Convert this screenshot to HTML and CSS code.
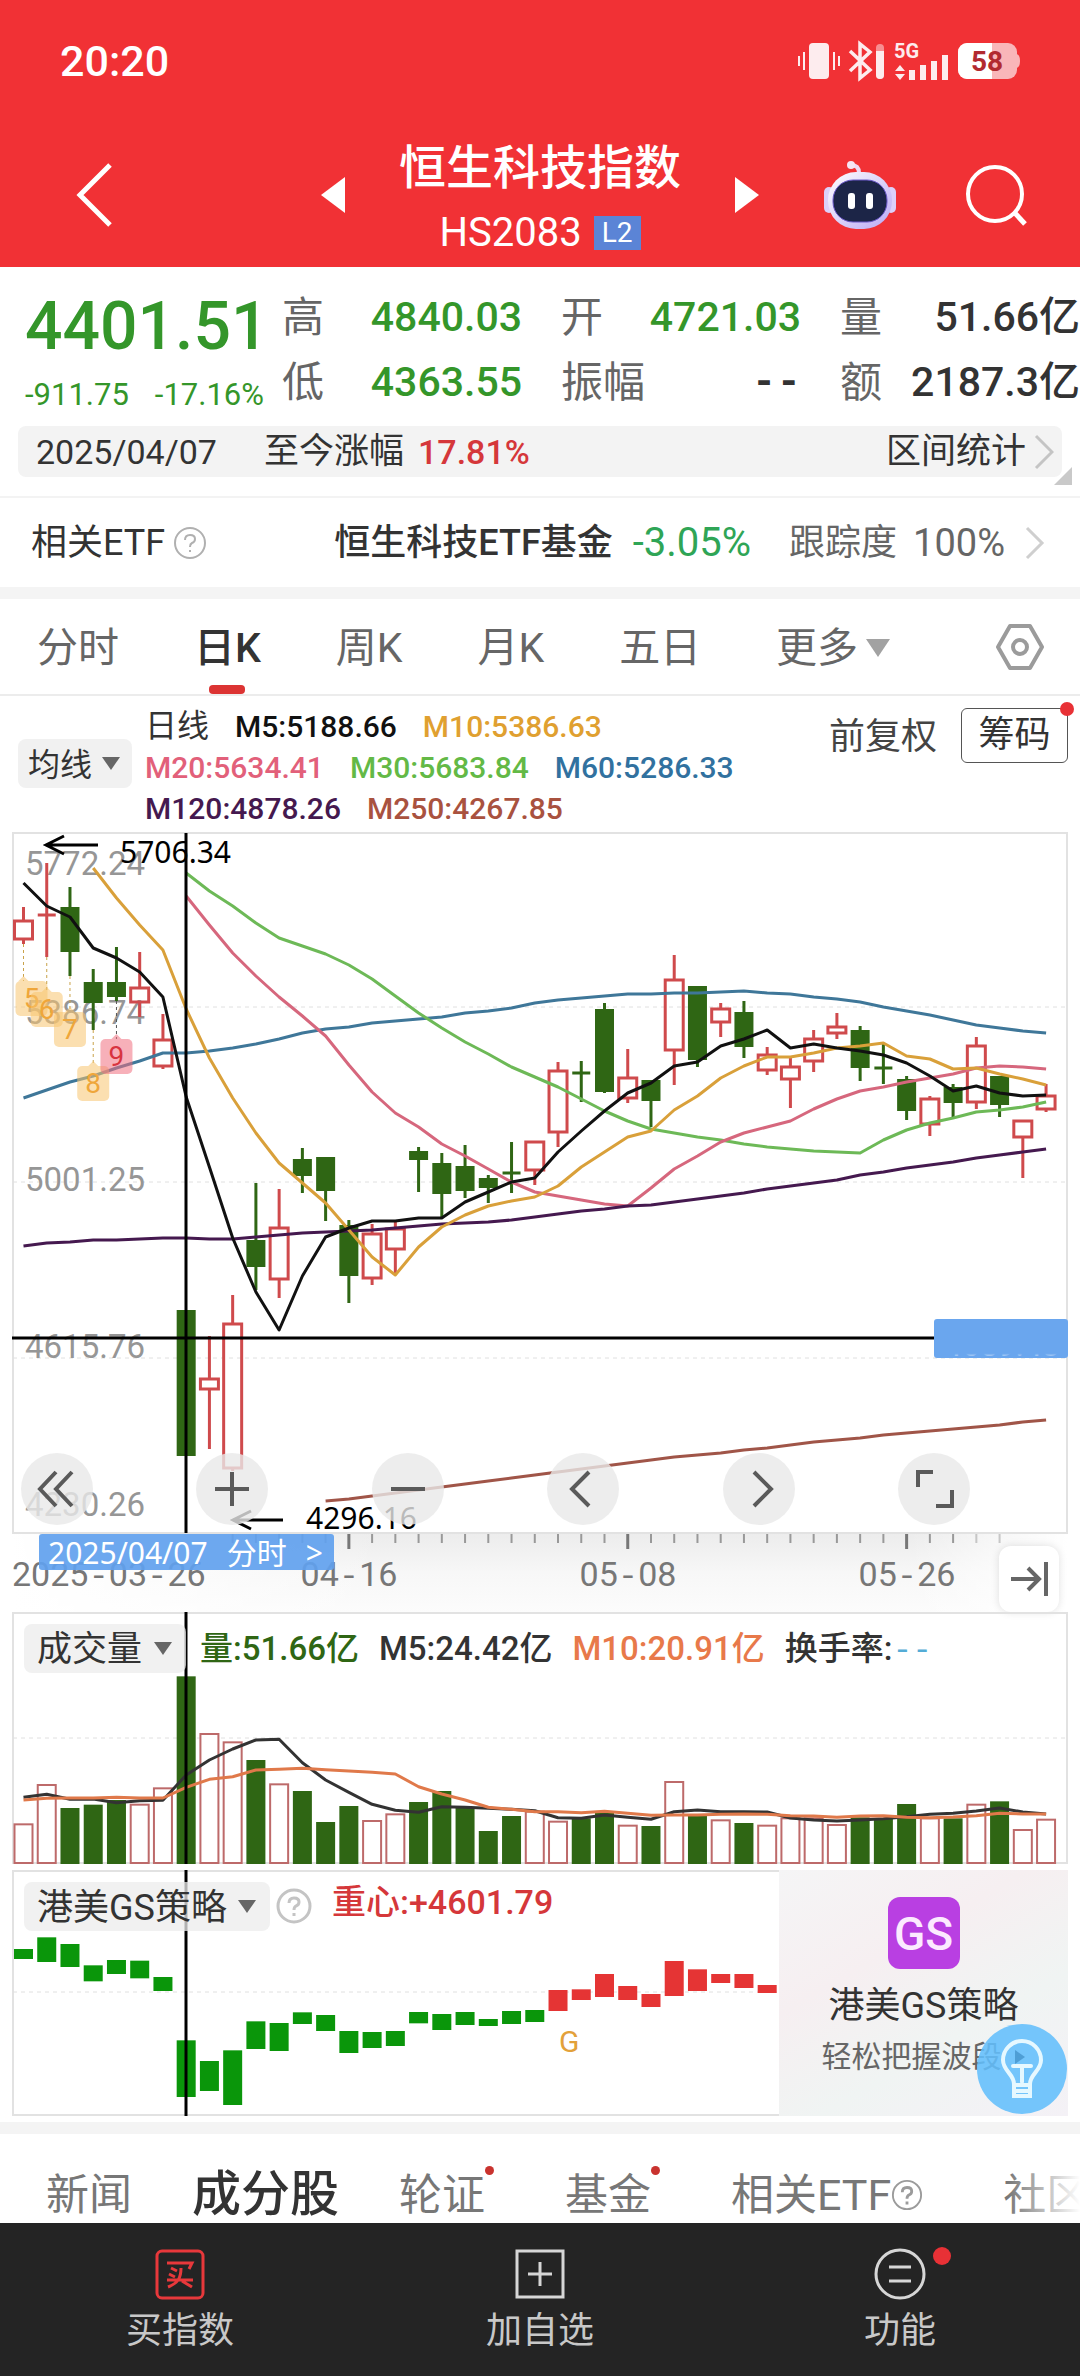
FILE: index.html
```html
<!DOCTYPE html>
<html lang="zh-CN">
<head>
<meta charset="utf-8">
<meta name="viewport" content="width=device-width">
<title>恒生科技指数 HS2083</title>
<link rel="stylesheet" href="styles.css">
</head>
<body>
<header class="top">
  <div class="status">
    <span class="clock">20:20</span>
    <svg class="status-icons" width="230" height="44" viewBox="0 0 230 44" aria-hidden="true">
      <g fill="#fdecee">
        <rect x="13" y="4" width="20" height="36" rx="4"/>
        <path d="M7 13h2v18H7zM2 17h2v10H2zM37 13h2v18h-2zM42 17h2v10h-2z"/>
        <rect x="80" y="5" width="8" height="35" rx="4" opacity=".5"/>
        <path d="M80 12h8v24a4 4 0 0 1-8 0z"/>
        <path d="M99 32l5-6 5 6zM99 35h10l-5 6zM113 31h6v10h-6zM124 26h6v15h-6zM135 22h6v19h-6zM146 16h6v25h-6z"/>
      </g>
      <path d="M54 12l20 19-10 8V5l10 8-20 19" fill="none" stroke="#fdecee" stroke-width="3.5"/>
      <text x="98" y="19" class="net">5G</text>
      <path d="M220 15q4 0 4 7t-4 7z" fill="#f9b6b9"/>
      <rect x="162" y="4" width="59" height="36" rx="9" fill="#f9b6b9"/>
      <path d="M171 4h25v36h-25a9 9 0 0 1-9-9V13a9 9 0 0 1 9-9z" fill="#fff"/>
      <text x="191" y="32" text-anchor="middle" class="battery">58</text>
    </svg>
  </div>
  <div class="titlebar">
    <div class="title-left">
      <button class="icon-btn" aria-label="返回"><svg width="38" height="66" viewBox="0 0 38 66"><path d="M34 3L4 33l30 30" fill="none" stroke="#fff" stroke-width="5"/></svg></button>
    </div>
    <div class="switcher">
      <button class="icon-btn" aria-label="上一个"><svg width="24" height="36" viewBox="0 0 24 36"><path d="M24 0v36L0 18z" fill="#fff"/></svg></button>
      <div class="name">
        <h1>恒生科技指数</h1>
        <p>HS2083<span class="level">L2</span></p>
      </div>
      <button class="icon-btn" aria-label="下一个"><svg width="24" height="36" viewBox="0 0 24 36"><path d="M0 0v36l24-18z" fill="#fff"/></svg></button>
    </div>
    <div class="title-right">
      <button class="icon-btn" aria-label="智能助手">
        <svg width="74" height="70" viewBox="0 0 74 70">
          <defs><linearGradient id="bot" x1="0" y1="0" x2="1" y2="1"><stop offset="0" stop-color="#fff"/><stop offset="1" stop-color="#b9a8f4"/></linearGradient></defs>
          <path d="M36 13q0-8-8-8" fill="none" stroke="#efd9f4" stroke-width="4"/><circle cx="28" cy="5" r="4" fill="#f6e4f4"/>
          <rect x="1" y="27" width="10" height="26" rx="5" fill="#dcd0fa"/><rect x="63" y="27" width="10" height="26" rx="5" fill="#dcd0fa"/>
          <rect x="5" y="12" width="64" height="57" rx="28" fill="url(#bot)"/>
          <rect x="10" y="20" width="54" height="42" rx="20" fill="#1c2547" stroke="#6a58c8" stroke-width="1"/>
          <rect x="25" y="33" width="7" height="16" rx="3" fill="#fff"/><rect x="43" y="33" width="7" height="16" rx="3" fill="#fff"/>
        </svg>
      </button>
      <button class="icon-btn" aria-label="搜索"><svg width="62" height="62" viewBox="0 0 62 62"><circle cx="30" cy="30" r="27" fill="none" stroke="#fff" stroke-width="4"/><path d="M49 48l11 12" stroke="#fff" stroke-width="5"/></svg></button>
    </div>
  </div>
</header>

<main>
<section class="quote">
  <div class="last">
    <strong>4401.51</strong>
    <p><span>-911.75</span><span>-17.16%</span></p>
  </div>
  <dl class="stats">
    <div><dt>高</dt><dd class="down">4840.03</dd></div>
    <div><dt>开</dt><dd class="down">4721.03</dd></div>
    <div><dt>量</dt><dd>51.66亿</dd></div>
    <div><dt>低</dt><dd class="down">4363.55</dd></div>
    <div><dt>振幅</dt><dd class="none">--</dd></div>
    <div><dt>额</dt><dd>2187.3亿</dd></div>
  </dl>
</section>

<section class="since">
  <time>2025/04/07</time>
  <span class="since-label">至今涨幅</span><b>17.81%</b>
  <a href="#range">区间统计<svg width="20" height="36" viewBox="0 0 20 36"><path d="M2 2l16 16L2 34" fill="none" stroke="#c4c4c4" stroke-width="3"/></svg></a>
  <i class="corner"></i>
</section>

<section class="etf">
  <span class="etf-label">相关ETF</span>
  <svg class="help" width="34" height="34" viewBox="0 0 34 34"><circle cx="17" cy="17" r="15" fill="none" stroke="#b0b0b0" stroke-width="2"/><path d="M12 14q0-5 5-5t5 4q0 3-3 4-2 1-2 4M17 24v2" fill="none" stroke="#b0b0b0" stroke-width="2"/></svg>
  <a class="etf-name" href="#etf">恒生科技ETF基金</a>
  <span class="etf-chg">-3.05%</span>
  <span class="etf-track">跟踪度</span>
  <span class="etf-pct">100%</span>
  <svg class="etf-more" width="20" height="34" viewBox="0 0 20 34"><path d="M2 2l15 15L2 32" fill="none" stroke="#cfcfcf" stroke-width="3"/></svg>
</section>
<hr class="band">

<nav class="periods">
  <button>分时</button>
  <button class="on">日K</button>
  <button>周K</button>
  <button>月K</button>
  <button>五日</button>
  <button class="more">更多<i class="tri"></i></button>
  <button class="gear" aria-label="设置"><svg width="50" height="48" viewBox="0 0 50 48"><path d="M15 3h20l12 21-12 21H15L3 24z" fill="none" stroke="#9b9b9b" stroke-width="4" stroke-linejoin="round"/><circle cx="25" cy="24" r="7" fill="none" stroke="#9b9b9b" stroke-width="4"/></svg></button>
</nav>

<section class="legend">
  <span class="pick pick-ma"><select aria-label="主图指标"><option>均线</option></select></span>
  <ul>
    <li class="plain">日线</li><li class="c-m5">M5:5188.66</li><li class="c-m10">M10:5386.63</li>
    <li class="brk c-m20">M20:5634.41</li><li class="c-m30">M30:5683.84</li><li class="c-m60">M60:5286.33</li>
    <li class="brk c-m120">M120:4878.26</li><li class="c-m250">M250:4267.85</li>
  </ul>
  <div class="legend-tools">
    <button class="adjust">前复权</button>
    <button class="chips">筹码<i class="dot"></i></button>
  </div>
</section>

<section class="chart price">
  <svg id="price" viewBox="12 832 1056 780" role="img" aria-label="日K线图">
    <defs>
      <linearGradient id="axisbg" x1="0" y1="0" x2="0" y2="1"><stop offset="0" stop-color="#ececec"/><stop offset=".5" stop-color="#f7f7f7"/><stop offset="1" stop-color="#fcfcfc"/></linearGradient>
      <linearGradient id="axisfade" x1="0" y1="0" x2="1" y2="0"><stop offset="0" stop-color="#fff"/><stop offset=".35" stop-color="#fff" stop-opacity="0"/><stop offset=".85" stop-color="#fff" stop-opacity="0"/><stop offset="1" stop-color="#fff"/></linearGradient>
      <linearGradient id="tagtext" x1="0" y1="0" x2="0" y2="1"><stop offset=".72" stop-color="#fff" stop-opacity="0"/><stop offset=".82" stop-color="#fff" stop-opacity=".6"/></linearGradient>
    </defs>
    <rect x="12" y="1533" width="1056" height="79" fill="url(#axisbg)"/>
    <rect x="12" y="1533" width="1056" height="79" fill="url(#axisfade)"/>
    <rect x="13" y="833" width="1054" height="700" class="frame"/>
    <path d="M13 1007H1067M13 1182H1067M13 1358H1067" class="grid"/>
    <g class="ylab">
      <text x="25" y="875">5772.24</text><text x="25" y="1024">5386.74</text><text x="25" y="1191">5001.25</text>
      <text x="25" y="1358">4615.76</text><text x="25" y="1516">4230.26</text>
    </g>
    <g id="price-data"></g>
    <g class="extreme">
      <path d="M98 845H46M64 836l-18 9 18 9M283 1520h-50M251 1511l-18 9 18 9"/>
      <text x="120" y="863">5706.34</text><text x="306" y="1529">4296.16</text>
    </g>
    <path d="M186 833V1533M12 1338H934" class="cross"/>
    <rect x="934" y="1319" width="134" height="39" rx="3" fill="#6aa6ee"/>
    <text x="1060" y="1356" text-anchor="end" class="tag-price">4659.43</text>
    <g id="ticks"></g>
    <g class="xlab">
      <text x="12" y="1586">2025<tspan class="dash">-</tspan>03<tspan class="dash">-</tspan>26</text><text x="349" y="1586" text-anchor="middle">04<tspan class="dash">-</tspan>16</text>
      <text x="628" y="1586" text-anchor="middle">05<tspan class="dash">-</tspan>08</text><text x="907" y="1586" text-anchor="middle">05<tspan class="dash">-</tspan>26</text>
    </g>
  </svg>
  <a class="day-link" href="#day"><span>2025/04/07</span><span>分时</span><span>&gt;</span></a>
  <div class="tools">
    <button aria-label="最左"><svg viewBox="0 0 72 72"><path d="M35 19L19 36l16 17M51 19L35 36l16 17"/></svg></button>
    <button aria-label="放大"><svg viewBox="0 0 72 72"><path d="M36 19v34M19 36h34"/></svg></button>
    <button aria-label="缩小"><svg viewBox="0 0 72 72"><path d="M19 36h34"/></svg></button>
    <button aria-label="左移"><svg viewBox="0 0 72 72"><path d="M42 19L25 36l17 17"/></svg></button>
    <button aria-label="右移"><svg viewBox="0 0 72 72"><path d="M31 19l17 17-17 17"/></svg></button>
    <button aria-label="全屏"><svg viewBox="0 0 72 72"><path d="M35 19H20v15M54 37v16H38"/></svg></button>
  </div>
  <button class="to-end" aria-label="回到最新"><svg width="40" height="36" viewBox="0 0 40 36"><path d="M2 18h28M19 7l11 11-11 11M37 1v34" fill="none" stroke="#666" stroke-width="4"/></svg></button>
</section>

<section class="chart volume">
  <svg id="volume" viewBox="12 1612 1056 252" role="img" aria-label="成交量">
    <rect x="13" y="1613" width="1054" height="250" class="frame"/>
    <path d="M13 1738H1067" class="grid"/>
    <g id="volume-data"></g>
    <path d="M186 1612V1864" class="cross"/>
  </svg>
  <div class="overlay">
    <span class="pick"><select aria-label="副图指标一"><option>成交量</option></select></span>
    <span class="v-now">量:51.66亿</span><span>M5:24.42亿</span><span class="v-m10">M10:20.91亿</span>
    <span>换手率:<em class="dash">--</em></span>
  </div>
</section>

<section class="chart strategy">
  <div class="gs-plot">
    <svg id="gs" viewBox="12 1870 767 246" role="img" aria-label="港美GS策略">
      <path d="M779 1871H13V2115H779" class="frame"/>
      <path d="M13 1992H779" class="grid"/>
      <g id="gs-data"></g>
      <text x="559" y="2052" class="gmark">G</text>
      <path d="M186 1870V2116" class="cross"/>
    </svg>
    <div class="overlay">
      <span class="pick"><select aria-label="副图指标二"><option>港美GS策略</option></select></span>
      <svg class="help" width="36" height="36" viewBox="0 0 36 36"><circle cx="18" cy="18" r="16" fill="#fff" stroke="#c4c4c4" stroke-width="3"/><path d="M13 15q0-5 5-5t5 4q0 3-3 4-2 1-2 4M18 25v3" fill="none" stroke="#c4c4c4" stroke-width="3"/></svg>
      <span class="gs-val">重心:+4601.79</span>
    </div>
  </div>
  <a class="promo" href="#gs">
    <span class="promo-logo">GS</span>
    <span class="promo-title">港美GS策略</span>
    <span class="promo-sub">轻松把握波段</span>
  </a>
  <button class="bulb" aria-label="提示"><svg width="90" height="90" viewBox="0 0 90 90"><path d="M38 26l10 7-10 7z" fill="#3f8dc4" opacity=".7"/><g fill="none" stroke="#e6f8ff" stroke-width="4" stroke-linecap="round"><path d="M37 60c0-10-11-13-11-24a19 19 0 0 1 38 0c0 11-11 14-11 24v12H37z"/><path d="M36 42h18M45 42v16M38 61h14M38 67h14"/></g></svg></button>
</section>
<hr class="band">

<nav class="tabs">
  <a href="#news">新闻</a>
  <a href="#parts" class="on">成分股</a>
  <a href="#warrant">轮证<i class="dot"></i></a>
  <a href="#fund">基金<i class="dot"></i></a>
  <a href="#etfs" class="wide">相关ETF<svg width="32" height="32" viewBox="0 0 34 34"><circle cx="17" cy="17" r="15" fill="none" stroke="#9b9b9b" stroke-width="2"/><path d="M12 14q0-5 5-5t5 4q0 3-3 4-2 1-2 4M17 24v3" fill="none" stroke="#9b9b9b" stroke-width="3"/></svg></a>
  <a href="#club">社区</a>
</nav>
</main>

<footer class="dock">
  <button><svg width="50" height="52" viewBox="0 0 50 52"><rect x="2" y="3" width="46" height="47" rx="5" fill="none" stroke="#e8383b" stroke-width="3"/><path d="M12 15h25l-3 6M16 20l6 3M14 26l6 3M12 32h26M26 20c0 10-3 15-13 19M27 33l10 6" fill="none" stroke="#e8383b" stroke-width="3"/></svg>买指数</button>
  <button><svg width="50" height="52" viewBox="0 0 50 52"><path d="M2 3h46v46H2zM25 14v24M13 26h24" fill="none" stroke="#d6d6d6" stroke-width="3"/></svg>加自选</button>
  <button class="fn"><svg width="52" height="52" viewBox="0 0 52 52"><circle cx="26" cy="26" r="24" fill="none" stroke="#d6d6d6" stroke-width="3"/><path d="M15 19h22M15 33h22" stroke="#d6d6d6" stroke-width="3"/></svg>功能<i class="dot"></i></button>
</footer>
<script src="chart.js"></script>
</body>
</html>
```
FILE: styles.css
```css
* { box-sizing: border-box; margin: 0; padding: 0; }
body {
  font-family: Roboto, "Noto Sans CJK SC", sans-serif;
  color: #333;
  background: #fff;
  overflow-x: hidden;
  min-height: 100vh;
  display: flex;
  flex-direction: column;
}
main { flex: 1; }
button, select { font: inherit; color: inherit; border: 0; background: none; }
a { color: inherit; text-decoration: none; }
ul { list-style: none; }
svg { display: block; }
.dash { font-family: "Liberation Mono", monospace; }

/* header */
.top { background: #f13135; color: #fff; }
.status { height: 122px; padding: 0 54px 0 60px; display: flex; justify-content: space-between; align-items: center; }
.clock { font-size: 43px; font-weight: 500; line-height: 48px; }
.net { font-size: 20px; font-weight: 700; fill: #fdecee; }
.battery { font-size: 28px; font-weight: 700; fill: #b22a30; }
.titlebar { height: 145px; display: grid; grid-template-columns: 1fr 438px 1fr; align-items: center; }
.icon-btn { display: block; }
.title-left { padding-left: 76px; }
.title-right { display: flex; justify-content: flex-end; align-items: center; gap: 68px; padding-right: 53px; }
.switcher { display: flex; justify-content: space-between; align-items: center; }
.name { text-align: center; padding-top: 10px; }
.name h1 { font-size: 47px; font-weight: 500; line-height: 66px; }
.name p { font-size: 40px; line-height: 64px; display: flex; justify-content: center; align-items: center; gap: 12px; }
.level { background: #5b84d6; font-size: 28px; line-height: 34px; padding: 0 8px; }

/* quote */
.quote { display: grid; grid-template-columns: 257px 1fr; padding: 18px 0 5px 25px; }
.last { color: #34962a; }
.last strong { display: block; font-size: 66px; font-weight: 500; line-height: 84px; }
.last p { font-size: 31px; line-height: 52px; display: flex; gap: 26px; }
.stats { display: grid; grid-template-columns: repeat(3, 1fr); column-gap: 39px; align-content: start; }
.stats div { display: flex; justify-content: space-between; white-space: nowrap; }
.stats dt { font-size: 42px; line-height: 65px; color: #666; }
.stats dd { font-size: 41px; line-height: 65px; font-weight: 500; }
.stats .down { color: #34962a; }
.stats .none { font-family: "Liberation Mono", monospace; font-weight: 700; }

.since { position: relative; display: flex; align-items: center; height: 51px; margin: 0 18px 19px; padding: 0 8px 0 18px; background: #f3f3f3; border-radius: 8px; font-size: 34px; line-height: 50px; }
.since time { width: 228px; }
.since-label, .since a { font-size: 35px; }
.since b { font-weight: 500; color: #d5373a; margin-left: 14px; }
.since a { margin-left: auto; display: flex; align-items: center; gap: 8px; }
.corner { position: absolute; right: -10px; bottom: -8px; border: 9px solid; border-color: transparent #c9c9c9 #c9c9c9 transparent; }

.etf { display: flex; align-items: center; height: 91px; border-top: 2px solid #f3f3f3; padding: 0 35px 0 31px; font-size: 36px; line-height: 50px; white-space: nowrap; }
.etf .help { margin-left: 8px; }
.etf-name { font-weight: 500; margin-left: auto; }
.etf-chg { color: #2fa556; font-size: 40px; margin-left: 20px; }
.etf-track { color: #666; margin-left: 38px; }
.etf-pct { color: #666; font-size: 38px; margin-left: 16px; }
.etf-more { margin-left: 20px; }
.band { border: 0; height: 12px; background: #f4f4f4; }

/* periods */
.periods { display: flex; justify-content: space-between; height: 97px; padding: 0 35px 0 37px; border-bottom: 2px solid #ececec; font-size: 41px; color: #666; }
.periods button { position: relative; padding-top: 3px; line-height: 92px; white-space: nowrap; }
.periods .on { color: #333; font-weight: 500; }
.periods .on::after { content: ""; position: absolute; left: 50%; bottom: 0; width: 36px; height: 9px; margin-left: -18px; border-radius: 4px; background: #dc3433; }
.periods .more { display: flex; align-items: center; gap: 8px; }
.tri { border: 12px solid transparent; border-top: 18px solid #a2a2a2; border-bottom: 0; }
.periods .gear { display: flex; align-items: center; padding: 0 0 0 30px; }

/* main chart legend */
.legend { display: grid; grid-template-columns: 114px 1fr auto; column-gap: 13px; padding: 10px 12px 3px 18px; }
.legend ul { display: flex; flex-wrap: wrap; column-gap: 26px; height: 123px; font-size: 30px; line-height: 41px; font-weight: 500; white-space: nowrap; width: 640px; }
.legend .plain { font-size: 32px; font-weight: 400; }
.legend ul .c-m250 { margin-right: 100px; }
.legend-tools { display: flex; align-items: flex-start; gap: 24px; margin-left: -60px; font-size: 36px; white-space: nowrap; }
.adjust { line-height: 62px; color: #444; }
.chips { position: relative; margin-top: 2px; width: 107px; line-height: 53px; border: 1px solid #555; border-radius: 6px; }
.dot { position: absolute; border-radius: 50%; background: #e83136; }
.chips .dot { width: 14px; height: 14px; right: -7px; top: -7px; }
.c-m5 { color: #111; }
.c-m10 { color: #e0a030; }
.c-m20 { color: #e2607a; }
.c-m30 { color: #63b946; }
.c-m60 { color: #31719f; }
.c-m120 { color: #45194f; }
.c-m250 { color: #a9523f; }

.pick { position: relative; align-self: start; background: rgba(236, 236, 236, .75); border-radius: 8px; }
.pick select { appearance: none; display: block; height: 49px; padding: 2px 43px 0 13px; font-size: 35px; line-height: 48px; color: #333; font-weight: 400; }
.pick::after { content: ""; position: absolute; right: 14px; top: 18px; border: 9px solid transparent; border-top: 13px solid #666; border-bottom: 0; pointer-events: none; }
.pick-ma { margin-top: 33px; }
.pick-ma select { font-size: 32px; padding: 2px 36px 0 10px; width: 114px; }
.pick-ma::after { right: 12px; }
.strategy .pick select { font-size: 36px; }

/* charts */
.chart { position: relative; margin: 0 12px; }
.chart svg[role] { width: 100%; height: auto; }
.frame { fill: none; stroke: #e2e2e2; stroke-width: 2; }
.grid { fill: none; stroke: #e0e0e0; stroke-width: 1; stroke-dasharray: 4 4; }
.cross { fill: none; stroke: #000; stroke-width: 3; }
.ylab { font-size: 33px; fill: #969696; }
.xlab { font-size: 34px; fill: #777; }
.extreme { font-family: "Noto Sans", sans-serif; font-size: 30px; }
.extreme path { fill: none; stroke: #000; stroke-width: 3; }
.tag-price { font-size: 32px; fill: url(#tagtext); }
.ma { fill: none; stroke-width: 3; stroke-linejoin: round; }
.tick { stroke: #999; stroke-width: 2; }
.tick.major { stroke: #777; stroke-width: 3; }
.mark { font-size: 28px; text-anchor: middle; }
.gmark { font-size: 30px; fill: #e3a13a; }

.day-link { position: absolute; left: 27px; top: 702px; width: 295px; height: 36px; padding: 0 11px 0 9px; display: flex; justify-content: space-between; background: rgba(97, 161, 238, .92); border-radius: 3px; color: #fff; font-family: "Noto Sans", "Noto Sans CJK SC", sans-serif; font-size: 30px; line-height: 38px; }
.tools { position: absolute; left: 9px; right: 98px; top: 621px; display: flex; justify-content: space-between; }
.tools button { width: 72px; height: 72px; border-radius: 50%; background: rgba(233, 233, 233, .8); }
.tools path { fill: none; stroke: #5a5a5a; stroke-width: 4; }
.to-end { position: absolute; right: 9px; top: 714px; width: 60px; height: 66px; display: flex; align-items: center; justify-content: center; background: #fff; border-radius: 12px; box-shadow: 0 0 8px rgba(0, 0, 0, .12); }

.overlay { position: absolute; left: 12px; top: 12px; display: flex; gap: 20px; font-size: 33px; font-weight: 500; line-height: 50px; white-space: nowrap; }
.volume .overlay .pick { margin-right: -6px; }
.v-now { color: #2f6614; }
.v-m10 { color: #e8794a; }
.overlay em { font-style: normal; color: #54acd6; }

.strategy { display: grid; grid-template-columns: 767fr 289fr; margin: 6px 12px; }
.gs-plot { position: relative; }
.strategy .overlay { gap: 6px; font-size: 34px; }
.strategy .help { margin: 6px 0; }
.gs-val { color: #d5373a; line-height: 40px; margin-left: 14px; }
.promo { display: flex; flex-direction: column; align-items: center; padding-top: 27px; white-space: nowrap; background: linear-gradient(150deg, #f5f5f6, #f6eff1 35%, #f0f4f3 65%, #f4f1f6); }
.promo-logo { width: 72px; height: 72px; border-radius: 12px; background: #b93fe2; color: #fceaff; font-size: 46px; font-weight: 500; line-height: 74px; text-align: center; }
.promo-title { font-size: 36px; line-height: 74px; }
.promo-sub { font-size: 30px; line-height: 28px; color: #666; padding-right: 24px; }
.bulb { position: absolute; right: 1px; bottom: 2px; width: 90px; height: 90px; border-radius: 50%; background: rgba(98, 190, 252, .88); }

/* bottom tabs */
.tabs { position: relative; display: flex; align-items: center; gap: 80px; height: 89px; padding: 33px 0 0 46px; font-size: 43px; line-height: 56px; color: #777; white-space: nowrap; overflow: hidden; }
.tabs::after { content: ""; position: absolute; right: 0; top: 0; bottom: 0; width: 73px; background: linear-gradient(90deg, rgba(255, 255, 255, 0), #fff); }
.tabs a { position: relative; display: flex; flex-shrink: 0; align-items: center; }
.tabs .on { font-size: 49px; font-weight: 500; color: #333; margin: 0 -20px; }
.tabs .dot { width: 9px; height: 9px; right: -9px; top: -1px; background: #c9332f; }

.dock { display: grid; grid-template-columns: repeat(3, 1fr); height: 153px; background: #242424; color: #c8c8c8; font-size: 36px; }
.dock button { position: relative; display: flex; flex-direction: column; align-items: center; padding-top: 25px; line-height: 63px; }
.dock .dot { width: 18px; height: 18px; left: 50%; top: 24px; margin-left: 33px; }
```
FILE: chart.js
```js
const NS = 'http://www.w3.org/2000/svg';
const GREEN = '#2f6614', RED = '#cf4a4c';
const cx = i => 23.5 + i * 23.24;

function add(parent, tag, attrs, text) {
  const el = document.createElementNS(NS, tag);
  for (const k in attrs) el.setAttribute(k, attrs[k]);
  if (text) el.textContent = text;
  parent.appendChild(el);
}
function line(parent, start, ys, color) {
  const points = ys.map((y, i) => cx(start + i).toFixed(1) + ',' + y.toFixed(1)).join(' ');
  add(parent, 'polyline', { points, class: 'ma', stroke: color });
}

// [rising, high, body top, body bottom, low]
const candles = [
  [1,907,921,939,944],[1,863,915,915,957],[0,887,907,952,976],[0,969,982,1003,1030],[0,947,982,997,1001],
  [1,952,988,1002,1017],[1,1014,1040,1066,1069],[0,1310,1310,1456,1456],[1,1336,1379,1389,1449],[1,1295,1324,1468,1471],
  [0,1183,1240,1267,1290],[1,1189,1228,1279,1298],[0,1148,1159,1176,1193],[0,1157,1157,1191,1221],[0,1220,1225,1276,1303],
  [1,1224,1234,1278,1285],[1,1222,1229,1249,1275],[0,1147,1151,1160,1192],[0,1153,1163,1194,1218],[0,1145,1166,1191,1198],
  [0,1175,1178,1188,1203],[0,1142,1173,1173,1193],[1,1142,1142,1170,1185],[1,1062,1071,1132,1147],[0,1061,1073,1073,1102],
  [0,1003,1009,1092,1093],[1,1049,1078,1098,1103],[0,1080,1080,1101,1127],[1,955,980,1050,1085],[0,986,986,1060,1067],
  [1,1003,1009,1022,1037],[0,1001,1012,1047,1058],[1,1047,1055,1070,1075],[1,1056,1067,1079,1108],[1,1030,1039,1061,1072],
  [1,1013,1027,1033,1039],[0,1026,1030,1068,1081],[0,1043,1068,1068,1084],[0,1076,1079,1111,1120],[1,1096,1099,1124,1136],
  [0,1084,1087,1103,1117],[1,1037,1046,1102,1109],[0,1076,1076,1105,1117],[1,1121,1121,1137,1178],[1,1084,1096,1109,1112]
];
const price = document.getElementById('price-data');
candles.forEach(([up, hi, top, bot, lo], i) => {
  const x = cx(i), color = up ? RED : GREEN;
  add(price, 'path', { d: `M${x} ${hi}V${top}M${x} ${bot}V${lo}`, stroke: color, 'stroke-width': 3 });
  if (top === bot) add(price, 'path', { d: `M${x - 9} ${top}h18`, stroke: color, 'stroke-width': 3 });
  else if (up) add(price, 'rect', { x: x - 9, y: top, width: 18, height: bot - top, fill: 'none', stroke: color, 'stroke-width': 3 });
  else add(price, 'rect', { x: x - 9.5, y: top, width: 19, height: bot - top, fill: color });
});

line(price, 0, [1098,1090,1082,1076,1068,1061,1053,1053,1051,1048,1044,1039,1033,1029,1027,1023,1021,1019,1017,1013,1011,1008,1003,1000,998,996,994,994,993,993,992,991,993,994,997,999,1002,1007,1011,1015,1020,1025,1028,1031,1033], '#3f7799');
line(price, 7, [873,891,906,923,938,946,954,965,979,996,1013,1028,1042,1054,1067,1077,1087,1099,1111,1121,1129,1133,1137,1140,1144,1147,1149,1151,1152,1153,1140,1130,1123,1118,1112,1110,1107,1102], '#6db957');
line(price, 7, [896,925,953,976,997,1016,1036,1065,1092,1113,1127,1144,1156,1169,1182,1192,1196,1200,1204,1206,1188,1169,1156,1142,1133,1127,1121,1109,1099,1091,1087,1082,1078,1074,1068,1066,1067,1069], '#d6677d');
line(price, 0, [1246,1243,1242,1240,1240,1239,1238,1238,1239,1239,1237,1235,1233,1232,1231,1230,1228,1226,1224,1223,1222,1220,1217,1214,1211,1209,1206,1205,1202,1199,1196,1193,1189,1186,1183,1180,1175,1172,1168,1165,1162,1158,1155,1152,1149], '#45194f');
line(price, 13, [1501,1499,1496,1493,1490,1487,1484,1481,1478,1475,1472,1469,1466,1463,1460,1457,1455,1453,1450,1448,1445,1442,1440,1438,1435,1433,1431,1429,1427,1425,1422,1420], '#a05548');
line(price, 3, [868,898,925,950,1009,1058,1098,1133,1163,1183,1203,1230,1257,1275,1247,1227,1215,1206,1201,1197,1186,1167,1152,1137,1131,1110,1096,1078,1066,1057,1057,1053,1048,1046,1043,1056,1059,1069,1068,1074,1079,1085], '#d9a03a');
line(price, 0, [883,906,917,948,958,972,997,1097,1167,1238,1292,1330,1276,1237,1228,1221,1221,1218,1218,1202,1192,1182,1178,1152,1131,1111,1093,1083,1066,1062,1046,1039,1030,1048,1044,1048,1051,1055,1063,1076,1091,1086,1093,1096,1095], '#111');

// sequence marks below the candles: [candle, box top, digit]
[[0,981,'5'],[1,992,'6'],[2,1012,'7'],[3,1066,'8'],[4,1039,'9']].forEach(([i, top, n]) => {
  const nine = n === '9', x = cx(i) + (i === 0 ? 8 : 0);
  add(price, 'path', { d: `M${cx(i)} ${candles[i][4]}V${top}`, stroke: nine ? '#555' : '#c9a24a', 'stroke-dasharray': '3 3' });
  add(price, 'path', { d: `M${cx(i) - 5} ${top}l5 -5 5 5z`, fill: nine ? '#f07080' : '#f8c470', opacity: .55 });
  add(price, 'rect', { x: x - 16, y: top, width: 32, height: 35, rx: 5, fill: nine ? '#f07080' : '#f8c470', opacity: .55 });
  add(price, 'text', { x, y: top + 27, class: 'mark', fill: nine ? '#d83440' : '#efa63a' }, n);
});

const ticks = document.getElementById('ticks');
for (let i = 9; i < 43; i++) {
  const major = i % 12 === 2;
  add(ticks, 'path', { d: `M${cx(i)} 1534v${major ? 15 : 9}`, class: major ? 'tick major' : 'tick', opacity: i > 40 ? .5 : 1 });
}

// bar tops and averages, in thirds of a pixel below y = 1600
const vy = v => 1600 + v / 3;
const bars = [673,555,624,614,600,614,565,229,402,427,480,553,573,666,618,663,643,606,573,623,693,648,635,665,655,635,677,678,546,645,661,669,677,655,655,675,652,655,612,655,655,614,604,690,659];
const volume = document.getElementById('volume-data');
bars.forEach((v, i) => {
  const y = vy(v), x = cx(i);
  if (candles[i][0]) add(volume, 'rect', { x: x - 9, y, width: 18, height: 1863 - y, fill: '#fff', stroke: '#bd6a6a', 'stroke-width': 2 });
  else add(volume, 'rect', { x: x - 9.5, y, width: 19, height: 1864 - y, fill: GREEN });
});
line(volume, 0, [592,583,598,597,608,602,601,525,480,447,420,418,488,540,577,613,631,637,620,622,625,628,632,653,655,645,652,658,635,630,635,635,636,654,660,663,660,656,650,643,640,633,624,636,642].map(vy), '#333');
line(volume, 0, [600,595,594,594,592,594,594,562,538,530,510,508,505,509,513,517,522,560,582,600,622,628,635,635,638,634,640,646,645,645,643,642,643,647,648,652,648,647,652,653,651,647,640,642,642].map(vy), '#e0794a');

const gs = document.getElementById('gs-data');
[[267,297],[232,306],[252,321],[316,364],[300,342],[302,355],[351,393],[541,711],[603,693],[571,735],[484,567],
 [489,573],[457,492],[465,513],[513,579],[516,564],[513,558],[456,490],[462,510],[456,495],[477,498],[453,492],
 [450,486],[390,453],[388,420],[342,411],[378,420],[402,441],[303,408],[328,393],[342,369],[342,384],[375,399]
].forEach(([a, b], i) => add(gs, 'rect', { x: cx(i) - 9.5, y: 1860 + a / 3, width: 19, height: (b - a) / 3, fill: i < 23 ? '#0a960a' : '#e53434' }));
```
